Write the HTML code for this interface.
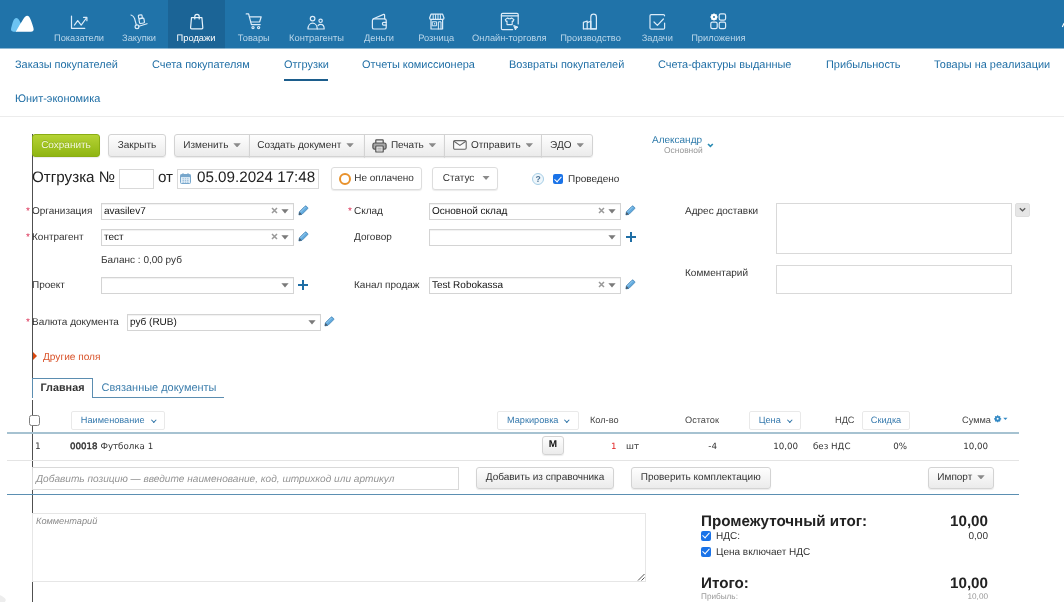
<!DOCTYPE html>
<html lang="ru">
<head>
<meta charset="utf-8">
<title>Отгрузка</title>
<style>
*{box-sizing:border-box;margin:0;padding:0}
html,body{width:1064px;height:602px;overflow:hidden;background:#fff}
body{font-family:"Liberation Sans",sans-serif;font-size:10px;color:#333;position:relative;text-rendering:geometricPrecision}
.a{position:absolute;white-space:nowrap}
/* top nav */
#nav{left:0;top:0;width:1064px;height:48px;background:#2073a9}
#nav .act{left:168px;top:0;width:57px;height:48px;background:#1b6496}
.nl{top:33px;font-size:9.3px;color:#b9d6ea;transform:translateX(-50%);line-height:11px}
.nl.on{color:#fff}
.ni{top:10px;width:22px;height:22px;transform:translateX(-50%)}
.ni svg{width:22px;height:22px;fill:none;stroke:#e4eff7;stroke-width:1.3;stroke-linecap:round;stroke-linejoin:round}
/* submenu */
.sm{font-size:10.95px;color:#1f6ea5;line-height:13px}
/* buttons */
.btn{height:23px;border:1px solid #d3d3d3;border-radius:3px;background:linear-gradient(#fefefe,#ebebeb);font-size:10px;color:#333;line-height:22.6px;text-align:center;box-shadow:0 1px 1px rgba(0,0,0,.08)}
.car{display:inline-block;width:7.4px;height:4.2px;background:#8a8a8a;clip-path:polygon(0 0,100% 0,50% 100%);vertical-align:middle;margin-left:5px;position:relative;top:0}
.lbl{font-size:10px;color:#333;line-height:12px}
.req{color:#dd3a5e;font-size:10px;line-height:12px}
.sel{height:17px;border:1px solid #d4d4d4;background:#fff;font-size:10px;line-height:15px;padding-left:2px;color:#111;box-shadow:inset 0 1px 1px rgba(0,0,0,.06)}
.sel .cr{position:absolute;right:3.6px;top:5.2px;width:8px;height:5px}
.sel .x{position:absolute;right:14.6px;top:3.3px;width:7px;height:7px}
.inp{border:1px solid #d9d9d9;background:#fff}
.hb{height:18.5px;border:1px solid #e9e9e9;border-radius:2px;background:#fff;font-size:9.2px;color:#3579ad;line-height:16.5px;text-align:center}
.th{font-size:9.2px;color:#444;line-height:11px}
.td{font-family:"DejaVu Sans","Liberation Sans",sans-serif;font-size:8.7px;color:#333;line-height:12px;margin-top:1.3px}

.ck{width:10px;height:10px;border-radius:2px;background:#1a73e8}
.ck:after{content:"";position:absolute;left:3.1px;top:0.6px;width:3.1px;height:5.9px;border:solid #fff;border-width:0 1.8px 1.8px 0;transform:rotate(42deg)}
.pen{width:11px;height:11px}
.plus{width:10px;height:10px}
.plus:before{content:"";position:absolute;left:0;top:4px;width:10px;height:2px;background:#1f6ea5}
.plus:after{content:"";position:absolute;left:4px;top:0;width:2px;height:10px;background:#1f6ea5}

.chv{display:inline-block;width:3.6px;height:3.6px;border:solid #2f74a8;border-width:0 1.7px 1.7px 0;transform:rotate(45deg);margin-left:7px;position:relative;top:-1.6px}
</style>
</head>
<body><div id="root" style="position:absolute;left:0;top:0;width:1064px;height:602px;will-change:transform;background:transparent">
<!-- NAV -->
<div class="a" id="nav">
  <div class="a act"></div>
  <svg class="a" style="left:0;top:0" width="1064" height="48" viewBox="0 0 1064 48" fill="none" stroke="#dcecf9" stroke-width="1.2" stroke-linecap="round" stroke-linejoin="round">
    <!-- logo -->
    <path d="M13.6,31.7 C11.2,31.7 10.5,30 11.3,27.6 C12.3,24 13.4,17.9 16.4,17.9 C18.8,17.9 20.2,22 21.6,24.8 L16.6,31.7 Z" fill="#6cc3f2" stroke="none"/>
    <path d="M15.8,31.7 C18,27.6 21.3,22.3 23.2,19.2 C24.6,16.9 25.7,15.7 27.1,15.7 C28.7,15.7 29.8,17.2 30.8,20 C31.8,22.6 32.8,25.6 33.4,27.8 C34.2,30.6 33.2,31.7 30.8,31.7 Z" fill="#fff" stroke="none"/>
    <!-- pokazateli -->
    <path d="M71.5,16 V28.3 H84.8"/>
    <path d="M74.4,25.1 L77.7,20.6 L81.2,25.1 L86.4,18"/>
    <path d="M83.6,17.4 H86.9 V20.7"/>
    <!-- zakupki -->
    <path d="M131,15 Q133.6,15.8 134.5,18.4 L136.3,24.8"/>
    <circle cx="137" cy="26.8" r="1.9"/>
    <path d="M138.9,26.2 L147,23.7"/>
    <g transform="rotate(-10 141 19)"><rect x="138.9" y="14.9" width="3.7" height="3.5" rx=".9"/><rect x="138.9" y="18.4" width="5" height="5" rx="1"/></g>
    <!-- prodazhi -->
    <path d="M191.5,17.6 H201.9 L202.8,27.6 Q202.9,28.8 201.7,28.8 H191.7 Q190.5,28.8 190.6,27.6 Z" stroke="#e8f3fb"/>
    <path d="M194.8,19 V16.5 A2.2,2.2 0 0 1 199.2,16.5 V19" stroke="#e8f3fb"/>
    <!-- tovary -->
    <path d="M246.2,13.9 H248.6 L251.4,24.6 H260.2"/>
    <path d="M249.4,16.8 H261.2 L259.6,22 H250.8"/>
    <circle cx="253" cy="27.6" r="1.1"/>
    <circle cx="258.6" cy="27.6" r="1.1"/>
    <!-- kontragenty -->
    <circle cx="312.6" cy="18.6" r="2.3"/>
    <path d="M308,29 C308,25.6 310,23.2 312.6,23.2 C315.2,23.2 317.2,25.6 317.2,29 Z"/>
    <circle cx="320.6" cy="20.8" r="1.7"/>
    <path d="M317.4,29 H324.2 C324.2,26.2 322.8,24.4 320.6,24.4 C319.4,24.4 318.6,24.9 318,25.6"/>
    <!-- dengi -->
    <rect x="372.4" y="18.8" width="13.8" height="10.2" rx="1.6"/>
    <path d="M373.4,18.8 L383.6,14.4 Q384.6,14.1 384.6,15.2 V18.8"/>
    <path d="M386.2,22.4 H383.6 Q382.4,22.4 382.4,23.8 Q382.4,25.2 383.6,25.2 H386.2"/>
    <!-- roznica -->
    <path d="M431,14.2 H442.6 L444,18 Q444,19.4 442.6,19.4 H431 Q429.6,19.4 429.6,18 Z"/>
    <path d="M433.2,14.6 V19 M435.6,14.6 V19 M438,14.6 V19 M440.4,14.6 V19" stroke-width="1"/>
    <path d="M431,19.4 V29 H442.6 V19.4"/>
    <rect x="432.6" y="21.8" width="4" height="4" stroke-width="1"/>
    <path d="M438.4,29 V21.8 H441 V29" stroke-width="1"/>
    <rect x="434" y="23.2" width="1.2" height="1.2" fill="#e6f0f8" stroke="none"/>
    <!-- online -->
    <path d="M518.2,24 V14.6 Q518.2,13.4 517,13.4 H502.6 Q501.4,13.4 501.4,14.6 V28.4 Q501.4,29.6 502.6,29.6 H512.6"/>
    <path d="M501.4,15.8 H518.2"/>
    <path d="M507.6,18 Q509.6,19.6 511.6,18 L514,19.6 L513,21.4 L512.2,21 V24.6 H507 V21 L506.2,21.4 L505.2,19.6 Z" stroke-width="1.1"/>
    <path d="M514,25.6 L518,27.2 L516.4,27.9 L515.6,29.6 Z" stroke-width="1" fill="#e6f0f8"/>
    <!-- proizvodstvo -->
    <path d="M583.4,28.8 V22.4 L587.2,21 V28.8 M587.2,22.6 L590.8,21.2 V28.8"/>
    <path d="M590.8,28.8 V17 A2.8,2.8 0 0 1 596.4,17 V28.8 Z"/>
    <path d="M583.4,28.8 H596.4"/>
    <!-- zadachi -->
    <path d="M664.6,23 V28 Q664.6,29.2 663.4,29.2 H651.2 Q650,29.2 650,28 V15.8 Q650,14.6 651.2,14.6 H663.4 Q664.6,14.6 664.6,15.8"/>
    <path d="M654,22 L657.4,25.4 L663.4,19"/>
    <!-- prilozheniya -->
    <rect x="719.2" y="13.8" width="6.4" height="6.4" rx="1.6"/>
    <rect x="710.8" y="22.2" width="6.4" height="6.4" rx="1.6"/>
    <rect x="719.2" y="22.2" width="6.4" height="6.4" rx="1.6"/>
    <circle cx="714" cy="17" r="2.1" stroke-width="2" stroke="#fff"/>
    <path d="M714,13.4 V20.6 M710.4,17 H717.6 M711.5,14.5 L716.5,19.5 M716.5,14.5 L711.5,19.5" stroke="#fff" stroke-width="1.5" stroke-linecap="butt"/>
    <circle cx="714" cy="17" r="1" fill="#2073a9" stroke="none"/>
    <!-- right-edge glyph -->
    <path d="M1062.5,26.5 L1064,23.5" stroke="#fff" stroke-width="1.2"/>
  </svg>
  <div class="a nl" style="left:79px">Показатели</div>
  <div class="a nl" style="left:139px">Закупки</div>
  <div class="a nl on" style="left:196px">Продажи</div>
  <div class="a nl" style="left:253.8px">Товары</div>
  <div class="a nl" style="left:316.5px">Контрагенты</div>
  <div class="a nl" style="left:379px">Деньги</div>
  <div class="a nl" style="left:436.2px">Розница</div>
  <div class="a nl" style="left:509.3px">Онлайн-торговля</div>
  <div class="a nl" style="left:590.5px">Производство</div>
  <div class="a nl" style="left:657.3px">Задачи</div>
  <div class="a nl" style="left:718.4px">Приложения</div>
</div>
<div class="a" style="left:0;top:48px;width:1064px;height:1px;background:#8db8d4"></div>
<div class="a" style="left:168px;top:48px;width:57px;height:1px;background:#8ab1cb"></div>
<!-- SUBMENU -->
<div class="a sm" style="left:15px;top:58.8px">Заказы покупателей</div>
<div class="a sm" style="left:152px;top:58.8px">Счета покупателям</div>
<div class="a sm" style="left:284px;top:58.8px">Отгрузки</div>
<div class="a" style="left:284px;top:79px;width:44px;height:2px;background:#1c5d8c"></div>
<div class="a sm" style="left:362px;top:58.8px">Отчеты комиссионера</div>
<div class="a sm" style="left:509px;top:58.8px">Возвраты покупателей</div>
<div class="a sm" style="left:658px;top:58.8px">Счета-фактуры выданные</div>
<div class="a sm" style="left:826px;top:58.8px">Прибыльность</div>
<div class="a sm" style="left:934px;top:58.8px">Товары на реализации</div>
<div class="a sm" style="left:15px;top:93px">Юнит-экономика</div>
<div class="a" style="left:0;top:116px;width:1064px;height:1px;background:#ececec"></div>
<!-- vertical line -->
<div class="a" style="left:32px;top:134px;width:1px;height:468px;background:#505050"></div>
<!-- MAIN -->

<!-- TOOLBAR -->
<div class="a btn" style="left:32px;top:134px;width:68px;background:linear-gradient(#b5d334,#8fb512);border-color:#8aad14;color:#f3f8da;text-shadow:0 -1px 0 rgba(0,0,0,.15)">Сохранить</div>
<div class="a btn" style="left:108px;top:134px;width:58px">Закрыть</div>
<div class="a btn" style="left:174px;top:134px;width:76px;border-radius:3px 0 0 3px">Изменить<i class="car"></i></div>
<div class="a btn" style="left:249px;top:134px;width:116px;border-radius:0;padding-right:3px">Создать документ<i class="car"></i></div>
<div class="a btn" style="left:364px;top:134px;width:81px;border-radius:0;padding-left:18px">Печать<i class="car"></i></div>
<div class="a btn" style="left:444px;top:134px;width:98px;border-radius:0;padding-left:18px">Отправить<i class="car"></i></div>
<div class="a btn" style="left:541px;top:134px;width:52px;border-radius:0 3px 3px 0">ЭДО<i class="car"></i></div>
<svg class="a" style="left:372px;top:138.5px" width="15" height="14" viewBox="0 0 15 14" fill="none" stroke="#505050" stroke-width="1.2" stroke-linejoin="round"><path d="M3.8,4 V1.4 Q3.8,0.8 4.4,0.8 H10.6 Q11.2,0.8 11.2,1.4 V4" fill="#eee"/><rect x="0.9" y="4" width="13.2" height="6.2" rx="1.8" fill="#a8a8a8"/><rect x="3.8" y="7" width="7.4" height="6" rx=".6" fill="#eee"/><path d="M5.4,9.2 H9.6 M5.4,11 H9.6" stroke-width=".8" stroke="#888"/></svg>
<svg class="a" style="left:453px;top:140px" width="14" height="10" viewBox="0 0 14 10"><rect x=".6" y=".6" width="12.6" height="8.6" rx="1.2" fill="#fafafa" stroke="#666" stroke-width="1.1"/><path d="M1,1.2 L6.9,5.4 L12.8,1.2" fill="none" stroke="#666" stroke-width="1.1"/></svg>
<div class="a" style="left:652px;top:135px;font-size:10px;color:#2f7bab;line-height:12px">Александр</div>
<div class="a" style="left:664px;top:145.5px;font-size:8.45px;color:#999;line-height:9px">Основной</div>
<svg class="a" style="left:707px;top:143px" width="7" height="5" viewBox="0 0 7 5"><path d="M1,1 L3.4,3.4 L5.8,1" fill="none" stroke="#2b8cb4" stroke-width="1.6"/></svg>
<!-- TITLE ROW -->
<div class="a" style="left:32px;top:168.5px;font-size:15.2px;line-height:18px;color:#222">Отгрузка №</div>
<div class="a inp" style="left:119px;top:168.5px;width:35px;height:20px"></div>
<div class="a" style="left:158px;top:168.5px;font-size:15.2px;line-height:18px;color:#222">от</div>
<div class="a inp" style="left:177px;top:168.5px;width:142px;height:20px"></div>
<svg class="a" style="left:180px;top:173px" width="11" height="11" viewBox="0 0 11 11"><rect x=".5" y="1.5" width="10" height="9" rx="1" fill="#e3eff8" stroke="#78a7cc" stroke-width="1"/><rect x=".5" y="1.5" width="10" height="2.6" fill="#78a7cc"/><path d="M2.5,5.8H8.5M2.5,7.6H8.5M2.5,9.2H8.5" stroke="#8cb4d4" stroke-width=".9" stroke-dasharray="1.4 .9"/><path d="M3,.3V2.4M8,.3V2.4" stroke="#78a7cc" stroke-width="1.2"/></svg>
<div class="a" style="left:197px;top:168.5px;font-size:15.2px;line-height:18px;color:#222">05.09.2024 17:48</div>
<div class="a btn" style="left:331px;top:166.5px;width:91px;height:23px;line-height:22.4px;background:#fff;border-color:#ddd;padding-left:15px">Не оплачено</div>
<div class="a" style="left:338.5px;top:172.5px;width:12px;height:12px;border:2px solid #e8912b;border-radius:50%"></div>
<div class="a btn" style="left:432px;top:166.5px;width:65.5px;height:23px;line-height:22.4px;background:#fff;border-color:#ddd;padding-left:3px">Статус<i class="car" style="margin-left:8px"></i></div>
<div class="a" style="left:532px;top:172.5px;width:12.4px;height:12.4px;border:1px solid #a5cde5;border-radius:50%;background:#eef6fb;color:#4b7295;font-size:8.6px;line-height:10.6px;text-align:center;font-weight:bold">?</div>
<div class="a ck" style="left:553.3px;top:174px"></div>
<div class="a lbl" style="left:568px;top:173.5px">Проведено</div>
<!-- FORM -->
<div class="a req" style="left:26px;top:205.5px">*</div><div class="a lbl" style="left:32px;top:205.6px">Организация</div>
<div class="a sel" style="left:101px;top:203px;width:193px">avasilev7<i class="x"><svg width="7" height="7" viewBox="0 0 7 7" style="display:block"><path d="M1,1 L6,6 M6,1 L1,6" stroke="#999" stroke-width="1.5"/></svg></i><i class="cr"><svg width="8" height="5" viewBox="0 0 8 5" style="display:block"><path d="M0.4,0.3 H7.6 L4,4.4 Z" fill="#7a7a7a"/></svg></i></div>
<div class="a pen" style="left:297.5px;top:205px"><svg width="11" height="11" viewBox="0 0 11 11" style="display:block"><g transform="translate(0.9,9.9) rotate(-45)"><path d="M0,0 L2.6,-1.8 H10.4 Q11.4,-1.8 11.4,-0.8 V0.8 Q11.4,1.8 10.4,1.8 H2.6 Z" fill="#62abdf" stroke="#3d7fb3" stroke-width="0.8"/><path d="M3,-0.9 H10.6" stroke="#9fd0f0" stroke-width="0.9"/><path d="M0,0 L2.4,-1.6 V1.6 Z" fill="#4a5560"/></g></svg></div>
<div class="a req" style="left:348px;top:205.5px">*</div><div class="a lbl" style="left:354px;top:205.6px">Склад</div>
<div class="a sel" style="left:429px;top:203px;width:192px">Основной склад<i class="x"><svg width="7" height="7" viewBox="0 0 7 7" style="display:block"><path d="M1,1 L6,6 M6,1 L1,6" stroke="#999" stroke-width="1.5"/></svg></i><i class="cr"><svg width="8" height="5" viewBox="0 0 8 5" style="display:block"><path d="M0.4,0.3 H7.6 L4,4.4 Z" fill="#7a7a7a"/></svg></i></div>
<div class="a pen" style="left:625px;top:205px"><svg width="11" height="11" viewBox="0 0 11 11" style="display:block"><g transform="translate(0.9,9.9) rotate(-45)"><path d="M0,0 L2.6,-1.8 H10.4 Q11.4,-1.8 11.4,-0.8 V0.8 Q11.4,1.8 10.4,1.8 H2.6 Z" fill="#62abdf" stroke="#3d7fb3" stroke-width="0.8"/><path d="M3,-0.9 H10.6" stroke="#9fd0f0" stroke-width="0.9"/><path d="M0,0 L2.4,-1.6 V1.6 Z" fill="#4a5560"/></g></svg></div>
<div class="a lbl" style="left:685px;top:205.5px">Адрес доставки</div>
<div class="a inp" style="left:776px;top:202.5px;width:236px;height:51.5px"></div>
<div class="a" style="left:1015px;top:203px;width:15px;height:14px;border:1px solid #dedede;border-radius:2px;background:#e6e6e6"><svg width="13" height="12" viewBox="0 0 13 12" style="display:block"><path d="M3.8,4.3 L6.5,6.8 L9.2,4.3" fill="none" stroke="#5a5a5a" stroke-width="1.3"/></svg></div>
<div class="a req" style="left:26px;top:231.5px">*</div><div class="a lbl" style="left:32px;top:231.6px">Контрагент</div>
<div class="a sel" style="left:101px;top:229px;width:193px">тест<i class="x"><svg width="7" height="7" viewBox="0 0 7 7" style="display:block"><path d="M1,1 L6,6 M6,1 L1,6" stroke="#999" stroke-width="1.5"/></svg></i><i class="cr"><svg width="8" height="5" viewBox="0 0 8 5" style="display:block"><path d="M0.4,0.3 H7.6 L4,4.4 Z" fill="#7a7a7a"/></svg></i></div>
<div class="a pen" style="left:298px;top:231px"><svg width="11" height="11" viewBox="0 0 11 11" style="display:block"><g transform="translate(0.9,9.9) rotate(-45)"><path d="M0,0 L2.6,-1.8 H10.4 Q11.4,-1.8 11.4,-0.8 V0.8 Q11.4,1.8 10.4,1.8 H2.6 Z" fill="#62abdf" stroke="#3d7fb3" stroke-width="0.8"/><path d="M3,-0.9 H10.6" stroke="#9fd0f0" stroke-width="0.9"/><path d="M0,0 L2.4,-1.6 V1.6 Z" fill="#4a5560"/></g></svg></div>
<div class="a lbl" style="left:354px;top:231.6px">Договор</div>
<div class="a sel" style="left:429px;top:229px;width:192px"><i class="cr"><svg width="8" height="5" viewBox="0 0 8 5" style="display:block"><path d="M0.4,0.3 H7.6 L4,4.4 Z" fill="#7a7a7a"/></svg></i></div>
<div class="a plus" style="left:625.5px;top:232px"></div>
<div class="a lbl" style="left:101px;top:254.5px">Баланс : 0,00 руб</div>
<div class="a lbl" style="left:685px;top:268.3px">Комментарий</div>
<div class="a inp" style="left:776px;top:265px;width:236px;height:29px"></div>
<div class="a lbl" style="left:32px;top:279.6px">Проект</div>
<div class="a sel" style="left:101px;top:277px;width:193px"><i class="cr"><svg width="8" height="5" viewBox="0 0 8 5" style="display:block"><path d="M0.4,0.3 H7.6 L4,4.4 Z" fill="#7a7a7a"/></svg></i></div>
<div class="a plus" style="left:297.6px;top:280px"></div>
<div class="a lbl" style="left:354px;top:279.6px">Канал продаж</div>
<div class="a sel" style="left:429px;top:277px;width:192px">Test Robokassa<i class="x"><svg width="7" height="7" viewBox="0 0 7 7" style="display:block"><path d="M1,1 L6,6 M6,1 L1,6" stroke="#999" stroke-width="1.5"/></svg></i><i class="cr"><svg width="8" height="5" viewBox="0 0 8 5" style="display:block"><path d="M0.4,0.3 H7.6 L4,4.4 Z" fill="#7a7a7a"/></svg></i></div>
<div class="a pen" style="left:625px;top:279px"><svg width="11" height="11" viewBox="0 0 11 11" style="display:block"><g transform="translate(0.9,9.9) rotate(-45)"><path d="M0,0 L2.6,-1.8 H10.4 Q11.4,-1.8 11.4,-0.8 V0.8 Q11.4,1.8 10.4,1.8 H2.6 Z" fill="#62abdf" stroke="#3d7fb3" stroke-width="0.8"/><path d="M3,-0.9 H10.6" stroke="#9fd0f0" stroke-width="0.9"/><path d="M0,0 L2.4,-1.6 V1.6 Z" fill="#4a5560"/></g></svg></div>
<div class="a req" style="left:26px;top:316.5px">*</div><div class="a lbl" style="left:32px;top:317.2px">Валюта документа</div>
<div class="a sel" style="left:127px;top:314px;width:194px">руб (RUB)<i class="cr"><svg width="8" height="5" viewBox="0 0 8 5" style="display:block"><path d="M0.4,0.3 H7.6 L4,4.4 Z" fill="#7a7a7a"/></svg></i></div>
<div class="a pen" style="left:324px;top:316px"><svg width="11" height="11" viewBox="0 0 11 11" style="display:block"><g transform="translate(0.9,9.9) rotate(-45)"><path d="M0,0 L2.6,-1.8 H10.4 Q11.4,-1.8 11.4,-0.8 V0.8 Q11.4,1.8 10.4,1.8 H2.6 Z" fill="#62abdf" stroke="#3d7fb3" stroke-width="0.8"/><path d="M3,-0.9 H10.6" stroke="#9fd0f0" stroke-width="0.9"/><path d="M0,0 L2.4,-1.6 V1.6 Z" fill="#4a5560"/></g></svg></div>
<div class="a" style="left:33.3px;top:352px;width:0;height:0;border-top:4px solid transparent;border-bottom:4px solid transparent;border-left:4.6px solid #d9480f"></div>
<div class="a lbl" style="left:43px;top:351.5px;color:#d9532a;font-size:10.15px">Другие поля</div>
<!-- TABS -->
<div class="a" style="left:32px;top:398px;width:1px;height:1.5px;background:#fff"></div>
<div class="a" style="left:93px;top:397px;width:131px;height:1px;background:#5b8db0"></div>
<div class="a" style="left:32px;top:378px;width:61px;height:20px;border:1px solid #5b8db0;border-bottom:none;font-size:10.8px;font-weight:bold;color:#333;line-height:19px;text-align:center;background:#fff">Главная</div>
<div class="a" style="left:101.5px;top:381.5px;font-size:10.95px;color:#3a7cab;line-height:13px">Связанные документы</div>

<!-- TABLE HEADER -->
<div class="a" style="left:29px;top:415px;width:11px;height:10.5px;border:1px solid #808080;border-radius:2.5px;background:#fff"></div>
<div class="a hb" style="left:71px;top:411px;width:94px">Наименование<i class="chv"></i></div>
<div class="a hb" style="left:497px;top:411px;width:82px">Маркировка<i class="chv"></i></div>
<div class="a th" style="left:590px;top:415px">Кол-во</div>
<div class="a th" style="left:685px;top:415px">Остаток</div>
<div class="a hb" style="left:749px;top:411px;width:52px">Цена<i class="chv"></i></div>
<div class="a th" style="left:835px;top:415px">НДС</div>
<div class="a hb" style="left:862px;top:411px;width:48px">Скидка</div>
<div class="a th" style="left:962px;top:415px">Сумма</div>
<svg class="a" style="left:994.4px;top:415.3px" width="14.6" height="8.2" viewBox="0 0 16 9"><circle cx="4" cy="4.2" r="2.2" fill="none" stroke="#3389c4" stroke-width="2"/><path d="M4,.3V8.1M.1,4.2H7.9M1.3,1.5L6.7,6.9M6.7,1.5L1.3,6.9" stroke="#3389c4" stroke-width="1.3"/><circle cx="4" cy="4.2" r="1.1" fill="#fff"/><path d="M10.2,3 H14.8 L12.5,5.6 Z" fill="#3389c4"/></svg>
<div class="a" style="left:7px;top:432px;width:1012px;height:2px;background:#a6c2d1"></div>
<!-- ROW -->
<div class="a td" style="left:35px;top:440px;font-size:9px">1</div>
<div class="a td" style="left:70px;top:440px"><span style="-webkit-text-stroke:0.45px #333">00018</span> Футболка 1</div>
<div class="a btn" style="left:542px;top:436px;width:22px;height:18.5px;line-height:15px;font-weight:bold;font-size:10px;color:#111">M</div>
<div class="a td" style="left:611px;top:440px;color:#e02020">1</div>
<div class="a td" style="left:626px;top:440px">шт</div>
<div class="a td" style="right:347px;top:440px">-4</div>
<div class="a td" style="right:266px;top:440px">10,00</div>
<div class="a td" style="left:813px;top:440px">без НДС</div>
<div class="a td" style="right:157px;top:440px">0%</div>
<div class="a td" style="right:76px;top:440px">10,00</div>
<div class="a" style="left:7px;top:460px;width:1012px;height:1px;background:#e4e4e4"></div>
<!-- ADD ROW -->
<div class="a inp" style="left:32px;top:467px;width:427px;height:23px;font-style:italic;color:#939393;font-size:10.1px;line-height:23px;padding-left:3px">Добавить позицию — введите наименование, код, штрихкод или артикул</div>
<div class="a btn" style="left:476px;top:467px;width:138px;height:22px;line-height:20px">Добавить из справочника</div>
<div class="a btn" style="left:631px;top:467px;width:139.5px;height:22px;line-height:20px">Проверить комплектацию</div>
<div class="a btn" style="left:928px;top:467px;width:66px;height:22px;line-height:20px">Импорт<i class="car"></i></div>
<div class="a" style="left:7px;top:494px;width:1012px;height:1px;background:#5b8fb2"></div>
<!-- COMMENT -->
<div class="a inp" style="left:32px;top:513px;width:614px;height:68.5px;border-color:#e6e6e6;font-style:italic;color:#8a8a8a;font-size:9.2px;line-height:11px;padding:2px 3px">Комментарий</div>
<svg class="a" style="left:637px;top:573px" width="8" height="8" viewBox="0 0 8 8"><path d="M1,7.5 L7.5,1 M4.5,7.5 L7.5,4.5" stroke="#555" stroke-width="1"/></svg>
<!-- TOTALS -->
<div class="a" style="left:701px;top:513.3px;font-size:15.2px;font-weight:bold;line-height:18px;color:#222">Промежуточный итог:</div>
<div class="a" style="right:76px;top:513.3px;font-size:15.2px;font-weight:bold;line-height:18px;color:#222">10,00</div>
<div class="a ck" style="left:701px;top:530.6px"></div>
<div class="a lbl" style="left:716px;top:530.8px">НДС:</div>
<div class="a lbl" style="right:76px;top:530.8px">0,00</div>
<div class="a ck" style="left:701px;top:546.7px"></div>
<div class="a lbl" style="left:716px;top:546.7px">Цена включает НДС</div>
<div class="a" style="left:701px;top:575.1px;font-size:15.2px;font-weight:bold;line-height:18px;color:#222">Итого:</div>
<div class="a" style="right:76px;top:575.1px;font-size:15.2px;font-weight:bold;line-height:18px;color:#222">10,00</div>
<div class="a" style="left:701px;top:592px;font-size:8.2px;color:#999;line-height:9px">Прибыль:</div>
<div class="a" style="right:76px;top:592px;font-size:8.2px;color:#999;line-height:9px">10,00</div>
<div class="a" style="left:-4px;top:596px;width:9px;height:9px;background:#ededed;border-radius:3px;transform:rotate(35deg)"></div>

</div></body>
</html>
